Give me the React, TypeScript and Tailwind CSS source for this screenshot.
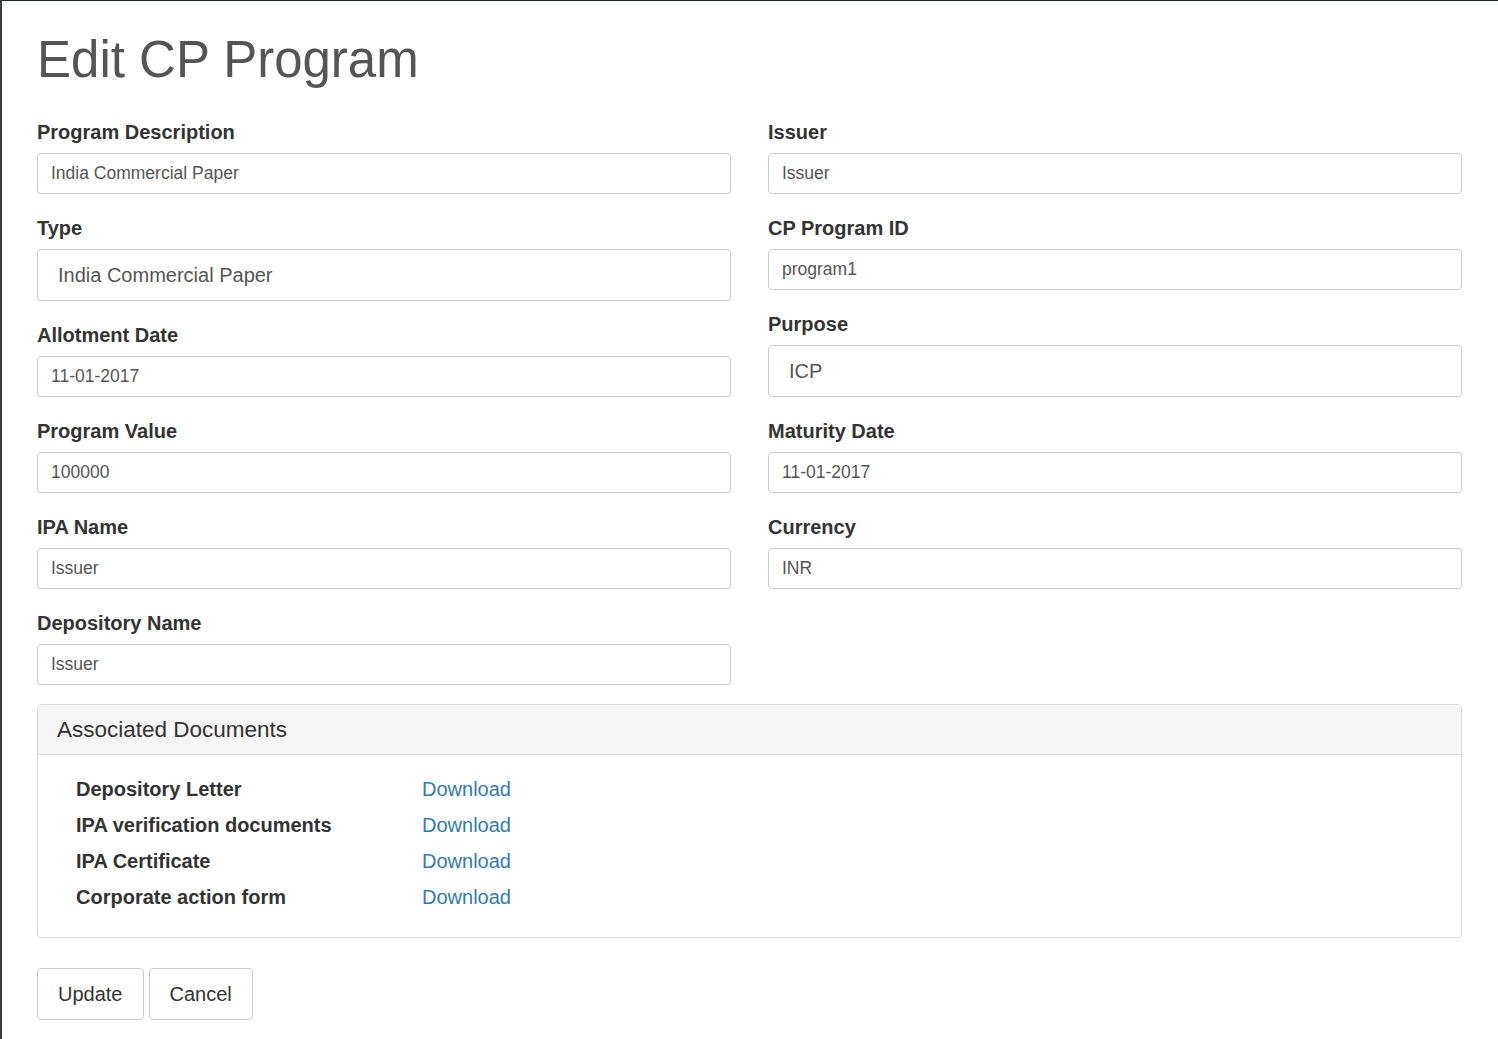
const font = { fontFamily: '"Liberation Sans", Arial, sans-serif' };

function Field({ label, value, big }: { label: string; value: string; big?: boolean }) {
  return (
    <div className="mb-[22px]">
      <label className="block text-[20px] leading-[24px] font-bold text-[#333] mb-[9px]">{label}</label>
      <div
        className={
          big
            ? "h-[52px] flex items-center px-5 border border-[#ccc] rounded-[4px] text-[20px] text-[#555] bg-white"
            : "h-[41px] flex items-center px-[13px] border border-[#ccc] rounded-[4px] text-[17.5px] text-[#555] bg-white"
        }
      >
        {value}
      </div>
    </div>
  );
}

const docs = ["Depository Letter", "IPA verification documents", "IPA Certificate", "Corporate action form"];

export default function App() {
  return (
    <div style={font} className="min-h-screen bg-white border-t border-l-2 border-t-[#1c2a35] border-l-[#3a3f44] pl-[35px] pr-[36px] pt-[30px] pb-5">
      <h1 className="text-[51px] leading-[57px] text-[#555] mb-[32px]">Edit CP Program</h1>

      <div className="grid grid-cols-2 gap-x-[37px]">
        <div>
          <Field label="Program Description" value="India Commercial Paper" />
          <Field label="Type" value="India Commercial Paper" big />
          <Field label="Allotment Date" value="11-01-2017" />
          <Field label="Program Value" value="100000" />
          <Field label="IPA Name" value="Issuer" />
          <Field label="Depository Name" value="Issuer" />
        </div>
        <div>
          <Field label="Issuer" value="Issuer" />
          <Field label="CP Program ID" value="program1" />
          <Field label="Purpose" value="ICP" big />
          <Field label="Maturity Date" value="11-01-2017" />
          <Field label="Currency" value="INR" />
        </div>
      </div>

      <div className="-mt-[3px] border border-[#ddd] rounded-[4px]">
        <div className="h-[50px] flex items-center pl-[19px] pr-5 bg-[#f5f5f5] border-b border-[#ddd] text-[22.5px] text-[#333] rounded-t-[4px]">
          Associated Documents
        </div>
        <div className="pt-4 pb-[22px] pl-[38px]">
          {docs.map((d) => (
            <div key={d} className="flex items-center h-[36px] text-[20px]">
              <span className="w-[346px] font-bold text-[#333]">{d}</span>
              <a href="#" className="text-[#337ab7]">Download</a>
            </div>
          ))}
        </div>
      </div>

      <div className="flex gap-[5px] mt-[30px]">
        <button className="h-[52px] px-5 border border-[#ccc] rounded-[4px] bg-white text-[20px] text-[#333]">Update</button>
        <button className="h-[52px] px-5 border border-[#ccc] rounded-[4px] bg-white text-[20px] text-[#333]">Cancel</button>
      </div>
    </div>
  );
}
